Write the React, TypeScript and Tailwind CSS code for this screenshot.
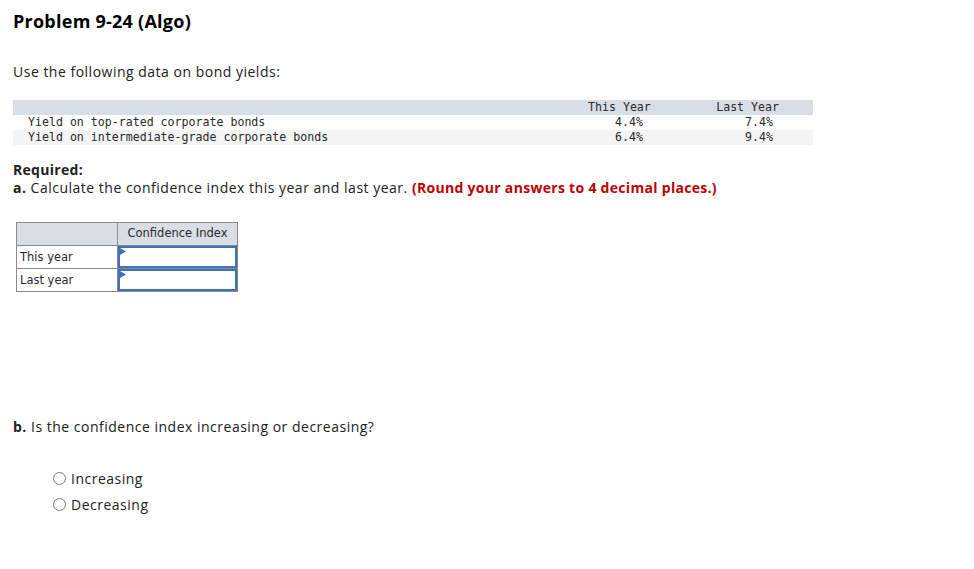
export default function App() {
  const body = { fontFamily: "'Open Sans', Lato, sans-serif" };
  const mono = { fontFamily: "'DejaVu Sans Mono', 'Liberation Mono', monospace" };

  const rows = [
    { label: "Yield on top-rated corporate bonds", now: "4.4%", last: "7.4%", bg: "bg-white" },
    { label: "Yield on intermediate-grade corporate bonds", now: "6.4%", last: "9.4%", bg: "bg-[#f4f4f4]" },
  ];

  return (
    <div className="w-[974px] h-[569px] bg-white text-[#212121] overflow-hidden tracking-[0.5px]" style={body}>
      <div className="pl-[13px] pt-[9px]">
        <h1 className="text-[18px] font-bold leading-[24px] text-black tracking-[0.25px]">Problem 9-24 (Algo)</h1>

        <p className="mt-[30px] text-[14px] leading-[18px]">Use the following data on bond yields:</p>

        {/* bond yield data */}
        <div className="mt-[19px] w-[800px] text-[11.6px] text-[#2a2a2a] whitespace-nowrap tracking-normal" style={mono}>
          <div className="grid grid-cols-[575px_80px_130px_15px] h-[15px] leading-[15px] bg-[#d9dde6]">
            <div />
            <div className="text-right pr-[18px]">This Year</div>
            <div className="text-right pr-[19px]">Last Year</div>
            <div />
          </div>
          {rows.map((r) => (
            <div key={r.label} className={`grid grid-cols-[575px_80px_130px_15px] h-[15px] leading-[15px] ${r.bg}`}>
              <div className="pl-[15px]">{r.label}</div>
              <div className="text-right pr-[25px]">{r.now}</div>
              <div className="text-right pr-[25px]">{r.last}</div>
              <div />
            </div>
          ))}
        </div>

        <div className="mt-[16px] text-[14px] leading-[18px]">
          <p className="font-bold tracking-[0.3px]">Required:</p>
          <p>
            <span className="font-bold">a.</span> Calculate the confidence index this year and last year.{" "}
            <span className="font-bold text-[#c00000] tracking-[0.3px]">(Round your answers to 4 decimal places.)</span>
          </p>
        </div>

        {/* answer table */}
        <table
          className="mt-[25px] ml-[3px] border-collapse text-[11.5px] text-[#2a2a2a] tracking-normal"
          style={{ fontFamily: "'DejaVu Sans', Verdana, sans-serif" }}
        >
          <tbody>
            <tr className="h-[23px] bg-[#d9dde6]">
              <td className="w-[101px] border border-[#8a8a8a]" />
              <td className="w-[120px] border border-[#8a8a8a] text-center">Confidence Index</td>
            </tr>
            {["This year", "Last year"].map((label) => (
              <tr key={label} className="h-[23px]">
                <td className="border border-[#8a8a8a] pl-[3px] pt-[2px]">{label}</td>
                <td className="border border-[#8a8a8a] p-0">
                  <div className="relative h-[22px] border-2 border-[#3d72b8] bg-white">
                    <svg className="absolute left-0 top-0" width="6" height="7" viewBox="0 0 6 7">
                      <path d="M0 0 L6 3.5 L0 7 Z" fill="#3d72b8" />
                    </svg>
                  </div>
                </td>
              </tr>
            ))}
          </tbody>
        </table>

        <p className="mt-[126px] text-[14px] leading-[17px]">
          <span className="font-bold">b.</span> Is the confidence index increasing or decreasing?
        </p>

        <div className="mt-[35px] ml-[40px] flex flex-col gap-[9px] text-[14px] leading-[17px]">
          {["Increasing", "Decreasing"].map((opt) => (
            <label key={opt} className="flex items-center gap-[5px]">
              <span className="w-[13px] h-[13px] rounded-full border border-[#7a7a7a] bg-white" />
              <span>{opt}</span>
            </label>
          ))}
        </div>
      </div>
    </div>
  );
}
